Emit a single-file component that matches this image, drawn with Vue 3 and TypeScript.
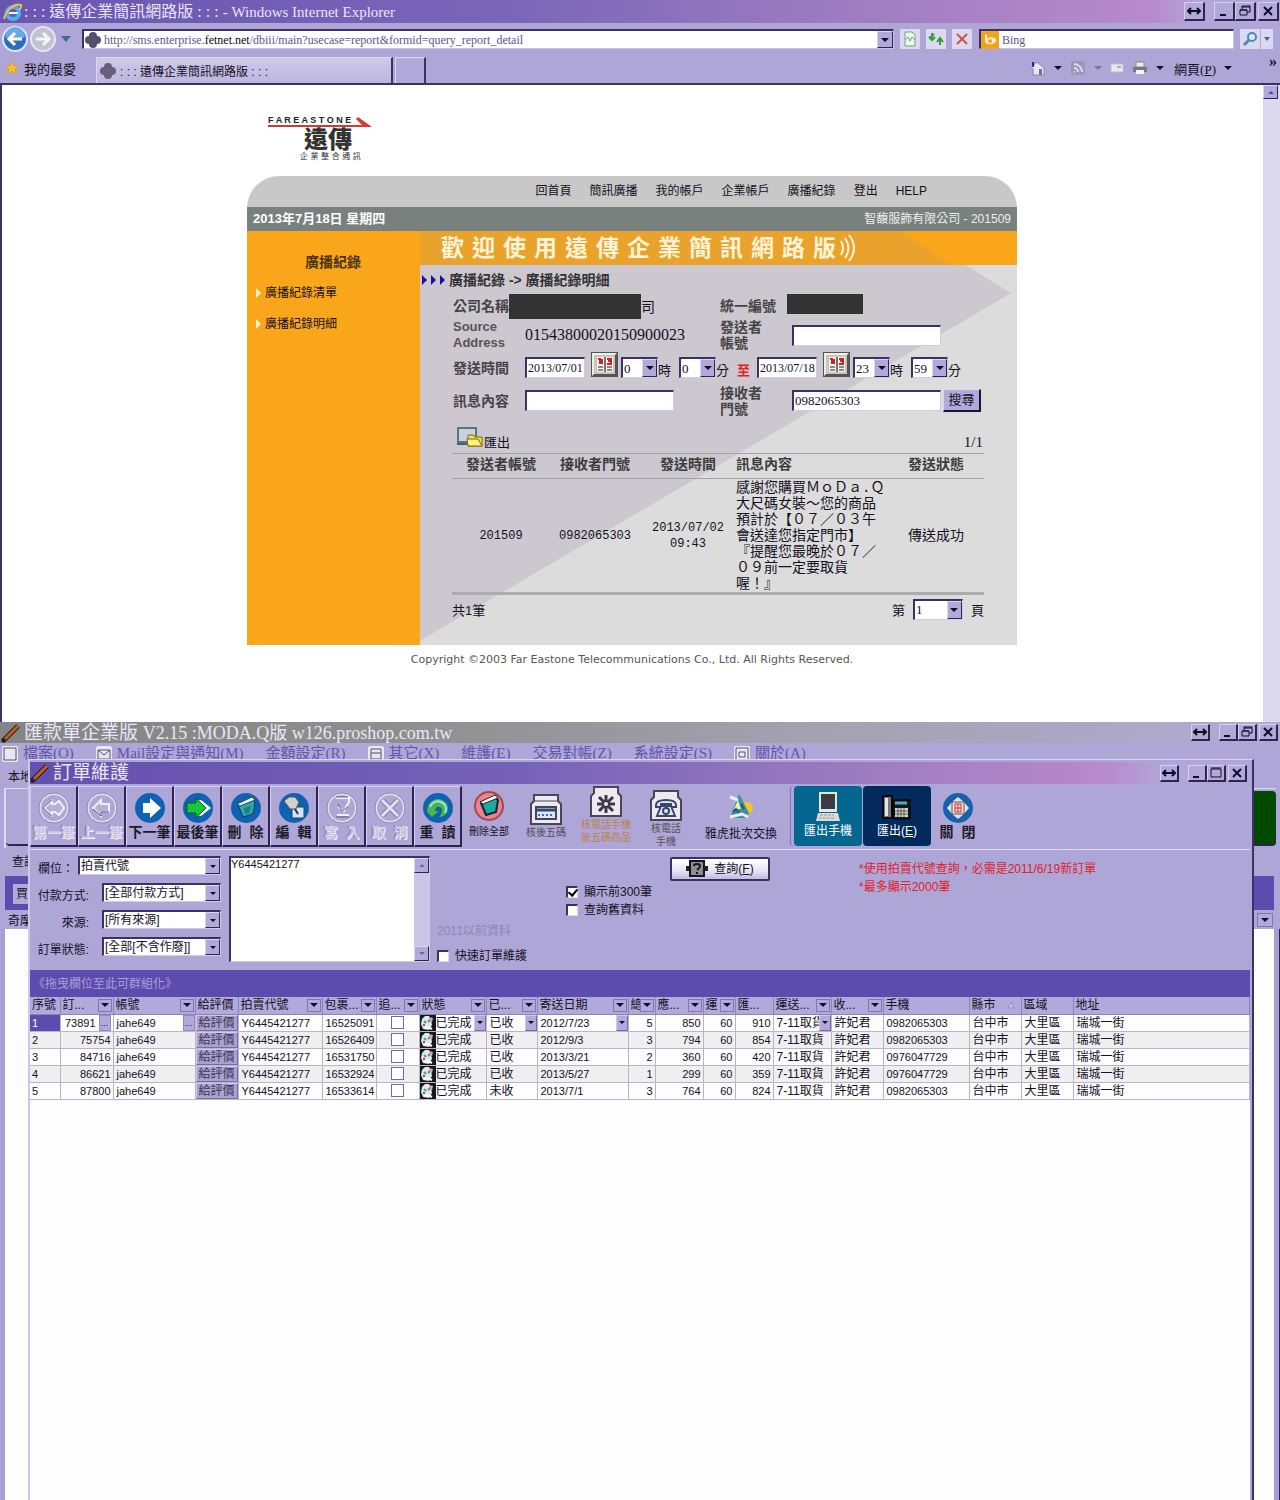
<script setup lang="ts">
import { ref } from 'vue'

const glyphs: Record<string, string> = {
  span: 'M1 7h12M4 4L1 7l3 3M10 4l3 3-3 3',
  min: 'M3 11h6',
  restore: 'M4 5V2h8v6h-3M2 6h7v5H2zM2 6h7M4 3h8',
  max: 'M2 3h10v8H2zM2 2h10',
  close: 'M3 3l8 8M11 3l-8 8',
}
const topButtons = ['span', 'min', 'restore', 'close']
const childButtons = ['span', 'min', 'max', 'close']

const siteNav = ['回首頁', '簡訊廣播', '我的帳戶', '企業帳戶', '廣播紀錄', '登出', 'HELP']
const sideLinks = ['廣播紀錄清單', '廣播紀錄明細']
const message = `感謝您購買ＭｏＤａ.Ｑ
大尺碼女裝～您的商品
預計於【０７／０３午
會送達您指定門市】
『提醒您最晚於０７／
０９前一定要取貨
喔！』`

const menus = [
  { label: '檔案(O)', icon: 'M2 2h12v12H2z' },
  { label: 'Mail設定與通知(M)', icon: 'M2 4h12v9H2zM2 4l6 5 6-5' },
  { label: '金額設定(R)', icon: '' },
  { label: '其它(X)', icon: 'M3 3h10v10H3zM3 7h10' },
  { label: '維護(E)', icon: '' },
  { label: '交易對帳(Z)', icon: '' },
  { label: '系統設定(S)', icon: '' },
  { label: '關於(A)', icon: 'M2 2h12v12H2zM5 6h6v5H5z' },
]

const tools = [
  { id: 'first', label: '第一筆', off: true },
  { id: 'prev', label: '上一筆', off: true },
  { id: 'next', label: '下一筆', off: false },
  { id: 'last', label: '最後筆', off: false },
  { id: 'delete', label: '刪  除', off: false },
  { id: 'edit', label: '編  輯', off: false },
  { id: 'save', label: '寫  入', off: true },
  { id: 'cancel', label: '取  消', off: true },
  { id: 'reload', label: '重  讀', off: false },
]

const filters = [
  { id: 'field', label: '欄位：', value: '拍賣代號', wide: true },
  { id: 'pay', label: '付款方式:', value: '[全部付款方式]', wide: false },
  { id: 'source', label: '來源:', value: '[所有來源]', wide: false },
  { id: 'state', label: '訂單狀態:', value: '[全部[不含作廢]]', wide: false },
]
const keyword = ref('Y6445421277')
const limitRows = ref(true)
const oldRows = ref(false)
const quick = ref(false)

interface Column { key: string; title: string; width: number; drop?: boolean; sort?: boolean }
const columns: Column[] = [
  { key: 'no', title: '序號', width: 30 },
  { key: 'order', title: '訂...', width: 53, drop: true },
  { key: 'account', title: '帳號', width: 82, drop: true },
  { key: 'rate', title: '給評價', width: 43 },
  { key: 'auction', title: '拍賣代號', width: 84, drop: true },
  { key: 'parcel', title: '包裹...', width: 54, drop: true },
  { key: 'track', title: '追...', width: 43, drop: true },
  { key: 'status', title: '狀態', width: 67, drop: true },
  { key: 'paid', title: '已...', width: 51, drop: true },
  { key: 'date', title: '寄送日期', width: 91, drop: true },
  { key: 'qty', title: '總', width: 27, drop: true },
  { key: 'due', title: '應...', width: 48, drop: true },
  { key: 'fee', title: '運', width: 32, drop: true },
  { key: 'total', title: '匯...', width: 38 },
  { key: 'ship', title: '運送...', width: 58, drop: true },
  { key: 'name', title: '收...', width: 52, drop: true },
  { key: 'phone', title: '手機', width: 86 },
  { key: 'city', title: '縣市', width: 52, sort: true },
  { key: 'area', title: '區域', width: 52 },
  { key: 'address', title: '地址', width: 0 },
]
const orders = [
  { no: 1, order: '73891', parcel: '16525091', paid: '已收', date: '2012/7/23', qty: 5, due: 850, total: 910, phone: '0982065303' },
  { no: 2, order: '75754', parcel: '16526409', paid: '已收', date: '2012/9/3', qty: 3, due: 794, total: 854, phone: '0982065303' },
  { no: 3, order: '84716', parcel: '16531750', paid: '已收', date: '2013/3/21', qty: 2, due: 360, total: 420, phone: '0976047729' },
  { no: 4, order: '86621', parcel: '16532924', paid: '已收', date: '2013/5/27', qty: 1, due: 299, total: 359, phone: '0976047729' },
  { no: 5, order: '87800', parcel: '16533614', paid: '未收', date: '2013/7/1', qty: 3, due: 764, total: 824, phone: '0982065303' },
]
</script>

<template>
  <div class="desktop">
    <section class="browser">
      <header class="titlebar">
        <svg class="app-icon" viewBox="0 0 20 20" width="20" height="20">
          <circle cx="10" cy="11" r="6" fill="none" stroke="#4db0f0" stroke-width="4" />
          <path d="M6 11h9" stroke="#e8f6ff" stroke-width="2" />
          <path d="M1 17C3 8 11 1 18 3c1 2-1 4-2 5" fill="none" stroke="#e8c04a" stroke-width="2" />
        </svg>
        <h1>: : : 遠傳企業簡訊網路版 : : : <span>- Windows Internet Explorer</span></h1>
        <div class="controls">
          <button v-for="b in topButtons" :key="b" :class="b" :aria-label="b">
            <svg viewBox="0 0 14 14" width="14" height="14"><path :d="glyphs[b]" /></svg>
          </button>
        </div>
      </header>

      <nav class="addressbar">
        <button class="round back" aria-label="上一頁">
          <svg viewBox="0 0 26 26" width="26" height="26">
            <circle cx="13" cy="13" r="12" fill="#2c6fc0" stroke="#dfe6f6" stroke-width="2" />
            <path d="M3 11a10 10 0 0 1 20 0c-5 3-14 3-20 0z" fill="#6aa8e6" />
            <path d="M20 13H8M13 7l-6 6 6 6" fill="none" stroke="#fff" stroke-width="3" />
          </svg>
        </button>
        <button class="round" aria-label="下一頁">
          <svg viewBox="0 0 26 26" width="26" height="26">
            <circle cx="13" cy="13" r="12" fill="#c2c2d2" stroke="#e6e4f2" stroke-width="2" />
            <path d="M6 13h12M13 7l6 6-6 6" fill="none" stroke="#f4f4fa" stroke-width="3" />
          </svg>
        </button>
        <svg class="mini" viewBox="0 0 10 6" width="10" height="6"><path d="M0 0h10L5 6z" fill="#3a6a98" /></svg>
        <div class="url">
          <svg viewBox="0 0 18 18" width="18" height="18"><g fill="#55506a"><circle cx="9" cy="5" r="4" /><circle cx="9" cy="13" r="4" /><circle cx="5" cy="9" r="4" /><circle cx="13" cy="9" r="4" /></g></svg>
          <p>http://sms.enterprise.<b>fetnet.net</b>/dbiii/main?usecase=report&amp;formid=query_report_detail</p>
          <button class="drop" aria-label="網址清單"></button>
        </div>
        <button class="flat" aria-label="相容性">
          <svg viewBox="0 0 18 18" width="18" height="18"><path d="M4 2h7l3 3v11H4zM4 10l3-3 2 4 2-4 3 3" fill="#eef6ee" stroke="#6aa878" /></svg>
        </button>
        <button class="flat" aria-label="重新整理">
          <svg viewBox="0 0 18 18" width="18" height="18"><path d="M7 4L4 7l-2 0M5 3v7M2 7l3 3 3-3M13 15V9M10 12l3-4 3 4" fill="none" stroke="#3a9a3c" stroke-width="2" /></svg>
        </button>
        <button class="flat" aria-label="停止">
          <svg viewBox="0 0 18 18" width="18" height="18"><path d="M4 4l10 10M14 4L4 14" fill="none" stroke="#d0504c" stroke-width="2" /></svg>
        </button>
        <div class="search">
          <svg viewBox="0 0 18 18" width="18" height="18"><rect width="18" height="18" fill="#f0a220" /><path d="M4 3l2 1v4c2-3 9-2 9 1 0 5-11 6-11 1z" fill="#fff2d0" /><circle cx="9" cy="10" r="2" fill="#f0a220" /></svg>
          <input type="text" aria-label="搜尋" value="Bing" />
        </div>
        <button class="flat find" aria-label="開始搜尋">
          <svg viewBox="0 0 18 18" width="18" height="18"><circle cx="11" cy="7" r="4" fill="#dcecfc" stroke="#4a86c8" stroke-width="2" /><path d="M8 10l-5 5" stroke="#4a86c8" stroke-width="3" /></svg>
        </button>
        <button class="flat slim" aria-label="搜尋選項"><svg viewBox="0 0 6 4" width="6" height="4"><path d="M0 0h6L3 4z" fill="#3a6a98" /></svg></button>
      </nav>

      <div class="tabs">
        <a class="fav" href="#">
          <svg viewBox="0 0 14 14" width="14" height="14"><path d="M7 0l2 5 5 0-4 3 2 6-5-4-5 4 2-6-4-3h5z" fill="#f8c030" stroke="#d89020" stroke-width=".6" /></svg>
          我的最愛
        </a>
        <button class="tab">
          <svg viewBox="0 0 18 18" width="18" height="18"><g fill="#66607c"><circle cx="9" cy="5" r="4" /><circle cx="9" cy="13" r="4" /><circle cx="5" cy="9" r="4" /><circle cx="13" cy="9" r="4" /></g></svg>
          : : : 遠傳企業簡訊網路版 : : :
        </button>
        <button class="tab blank" aria-label="新索引標籤"></button>
        <div class="commands">
          <svg viewBox="0 0 16 16" width="16" height="16"><path d="M1 8l6-6 7 6v7H3V8" fill="#e8e6f4" stroke="#8a86a8" /><path d="M3 2v5" stroke="#2c2c9c" stroke-width="2" /><path d="M9 9h3v6H9z" fill="#5a7a9a" /></svg>
          <i class="tri"></i>
          <svg viewBox="0 0 16 16" width="16" height="16"><rect x="1" y="1" width="14" height="14" rx="2" fill="#9c98b8" /><path d="M4 12h1M4 8a4 4 0 0 1 4 4M4 4a8 8 0 0 1 8 8" fill="none" stroke="#dedcec" stroke-width="2" /></svg>
          <i class="tri dim"></i>
          <svg viewBox="0 0 14 16" width="14" height="16"><path d="M1 4h12v8H1z" fill="#e8e8ee" stroke="#c0bcd8" /><path d="M7 6h4v2H7z" fill="#aab" /></svg>
          <svg viewBox="0 0 16 16" width="16" height="16"><path d="M4 2h8v5H4z" fill="#eee" stroke="#888" /><path d="M1 7h14v5H1z" fill="#77758a" /><path d="M4 10h8v4H4z" fill="#f4f4f4" /></svg>
          <i class="tri"></i>
          <a href="#">網頁(<u>P</u>)</a>
          <i class="tri"></i>
          <b>»</b>
        </div>
      </div>

      <div class="viewport">
        <div class="page">
          <div class="logo">
            <div class="brand"><b>F A R E A S T O N E</b>
              <svg viewBox="0 0 104 12" width="104" height="12"><path d="M0 9h90" stroke="#c83c3c" stroke-width="2" /><path d="M90 0l14 10H84V8h10L88 2z" fill="#d83a30" /></svg>
            </div>
            <strong>遠傳</strong>
            <small>企 業 整 合 通 訊</small>
          </div>

          <div class="panel">
            <nav class="sitenav"><a v-for="n in siteNav" :key="n" href="#">{{ n }}</a></nav>
            <div class="datebar"><b>2013年7月18日 星期四</b><span>智馥服飾有限公司 - 201509</span></div>
            <div class="split">
              <aside>
                <h2>廣播紀錄</h2>
                <a v-for="l in sideLinks" :key="l" href="#">{{ l }}</a>
              </aside>
              <main>
                <div class="welcome">歡 迎 使 用 遠 傳 企 業 簡 訊 網 路 版
                  <svg viewBox="0 0 16 28" width="16" height="28"><path d="M1 7q4 7 0 14M5 4q7 10 0 20M9 1q10 13 0 26" fill="none" stroke="#fff3d8" stroke-width="2" /></svg>
                </div>
                <div class="crumb"><i></i><i></i><i></i><h3>廣播紀錄 -&gt; 廣播紀錄明細</h3></div>

                <form class="query" @submit.prevent>
                  <span class="lab">公司名稱</span>
                  <div class="company"><span class="redact"></span>司</div>
                  <span class="lab">統一編號</span>
                  <div class="company"><span class="redact short"></span></div>

                  <span class="lab latin">Source Address</span>
                  <div class="source">01543800020150900023</div>
                  <label class="lab" for="sender">發送者<br />帳號</label>
                  <div class="field"><input id="sender" type="text" class="long" /></div>

                  <label class="lab" for="from">發送時間</label>
                  <div class="times">
                    <input id="from" type="text" class="date" value="2013/07/01" />
                    <button type="button" class="cal" aria-label="選擇開始日期"><svg viewBox="0 0 18 18" width="18" height="18"><path d="M1 1h7v15H1zM10 1h7v15h-7z" fill="#f8f4f0" /><path d="M2 3h2v5M6 8V3M11 3h4v2h-3M15 5v3h-4" fill="none" stroke="#c8242c" stroke-width="2" /><path d="M2 11h5M11 11h5M2 14h5M11 14h5M9 1v15" stroke="#222" /></svg></button>
                    <span class="combo small"><select aria-label="開始時"><option>0</option></select><i></i></span><span class="unit">時</span>
                    <span class="combo small"><select aria-label="開始分"><option>0</option></select><i></i></span><span class="unit">分</span>
                    <em>至</em>
                    <input type="text" class="date" aria-label="結束日期" value="2013/07/18" />
                    <button type="button" class="cal" aria-label="選擇結束日期"><svg viewBox="0 0 18 18" width="18" height="18"><path d="M1 1h7v15H1zM10 1h7v15h-7z" fill="#f8f4f0" /><path d="M2 3h2v5M6 8V3M11 3h4v2h-3M15 5v3h-4" fill="none" stroke="#c8242c" stroke-width="2" /><path d="M2 11h5M11 11h5M2 14h5M11 14h5M9 1v15" stroke="#222" /></svg></button>
                    <span class="combo small"><select aria-label="結束時"><option>23</option></select><i></i></span><span class="unit">時</span>
                    <span class="combo small"><select aria-label="結束分"><option>59</option></select><i></i></span><span class="unit">分</span>
                  </div>

                  <label class="lab" for="content">訊息內容</label>
                  <div class="field"><input id="content" type="text" class="long" /></div>
                  <label class="lab" for="receiver">接收者<br />門號</label>
                  <div class="field"><input id="receiver" type="text" class="long" value="0982065303" /><button type="submit" class="go">搜尋</button></div>
                </form>

                <div class="results">
                  <div class="export">
                    <a href="#">
                      <svg viewBox="0 0 26 22" width="26" height="22"><path d="M1 2h18v14H1z" fill="#c6d2dc" stroke="#5a7284" stroke-width="2" /><path d="M0 18h12" stroke="#466" stroke-width="2" /><path d="M11 9h5l2 2h7v9H11z" fill="#f2e04a" stroke="#7a6c10" /><path d="M11 20l-1-7h11l4 7z" fill="#fff27a" stroke="#7a6c10" /></svg>
                      匯出
                    </a>
                    <span>1/1</span>
                  </div>
                  <table class="log">
                    <colgroup><col class="c1" /><col class="c2" /><col class="c3" /><col class="c4" /><col class="c5" /></colgroup>
                    <thead><tr><th>發送者帳號</th><th>接收者門號</th><th>發送時間</th><th class="left">訊息內容</th><th>發送狀態</th></tr></thead>
                    <tbody><tr><td>201509</td><td>0982065303</td><td>2013/07/02<br />09:43</td><td class="left msg">{{ message }}</td><td>傳送成功</td></tr></tbody>
                  </table>
                  <div class="pager">
                    <span>共1筆</span>
                    <label>第 <span class="combo page-no"><select aria-label="頁次"><option>1</option></select><i></i></span> 頁</label>
                  </div>
                </div>
              </main>
            </div>
          </div>
          <footer>Copyright ©2003 Far Eastone Telecommunications Co., Ltd. All Rights Reserved.</footer>
        </div>
        <div class="vscroll"><button aria-label="向上捲動"></button></div>
      </div>
    </section>

    <section class="shop">
      <header class="titlebar gray">
        <svg class="app-icon" viewBox="0 0 20 20" width="20" height="20"><path d="M2 18L17 3" stroke="#2a1a14" stroke-width="5" /><path d="M3 17L17 3" stroke="#b8632c" stroke-width="3" /><path d="M1 19l3-3" stroke="#222" stroke-width="3" /></svg>
        <h1>匯款單企業版 <span>V2.15 :MODA.Q版 w126.proshop.com.tw</span></h1>
        <div class="controls">
          <button v-for="b in topButtons" :key="b" :class="b" :aria-label="b">
            <svg viewBox="0 0 14 14" width="14" height="14"><path :d="glyphs[b]" /></svg>
          </button>
        </div>
      </header>
      <nav class="menus">
        <a v-for="m in menus" :key="m.label" href="#">
          <svg v-if="m.icon" viewBox="0 0 16 16" width="16" height="16"><rect width="16" height="16" rx="2" fill="#e8e6f2" /><path :d="m.icon" fill="none" stroke="#55506a" /></svg>
          {{ m.label }}
        </a>
      </nav>

      <div class="behind">
        <div class="b-tab">本地</div>
        <div class="b-tools"><span></span></div>
        <div class="b-label">查詢</div>
        <div class="b-group"><span>買</span></div>
        <div class="b-head"><span>奇摩</span><button class="filter" aria-label="篩選"></button></div>
        <div class="b-body"></div>
      </div>

      <section class="child">
        <header class="titlebar inner">
          <svg class="app-icon" viewBox="0 0 20 20" width="20" height="20"><path d="M2 18L17 3" stroke="#2a1a14" stroke-width="5" /><path d="M3 17L17 3" stroke="#b8632c" stroke-width="3" /><path d="M1 19l3-3" stroke="#222" stroke-width="3" /></svg>
          <h1>訂單維護</h1>
          <div class="controls">
            <button v-for="b in childButtons" :key="b" :class="b" :aria-label="b">
              <svg viewBox="0 0 14 14" width="14" height="14"><path :d="glyphs[b]" /></svg>
            </button>
          </div>
        </header>

        <div class="toolbar">
          <button v-for="t in tools" :key="t.id" class="tool" :class="{ off: t.off }">
            <svg viewBox="0 0 32 32" width="32" height="32">
              <circle v-if="t.off" cx="16" cy="16" r="14" fill="none" stroke="#e9e7f4" stroke-width="2" />
              <circle v-if="t.off" cx="16" cy="16" r="15" fill="none" stroke="#8e88b0" stroke-width="1" />
              <circle v-if="!t.off" cx="16" cy="16" r="15" fill="#0f62b2" />
              <g v-if="t.id === 'first'"><path d="M14 9l-8 7 8 7v-3h3l4 3 5-7-5-7-4 3h-3z" fill="#b6b0d6" stroke="#efeefa" stroke-width="2" /><path d="M14 8l-9 8 9 8" fill="none" stroke="#6c6890" /></g>
              <g v-else-if="t.id === 'prev'"><path d="M15 8l-8 8 8 8v-4h8v-8h-8z" fill="#b6b0d6" stroke="#efeefa" stroke-width="2" /><path d="M7 17l8 7v-4h8" fill="none" stroke="#403c5c" /></g>
              <path v-else-if="t.id === 'next'" d="M16 6l11 10-11 10v-5H9V11h7z" fill="#fff" />
              <g v-else-if="t.id === 'last'"><path d="M19 8l10 8-10 8h-4V8z" fill="#fff" /><path d="M14 6l10 10-10 10v-5H5V11h9z" fill="#18c838" stroke="#0a5a20" /></g>
              <g v-else-if="t.id === 'delete'"><path d="M8 13l14-6 3 3-2 12-10 3z" fill="#2ea6a8" stroke="#073a5c" /><path d="M7 12l15-7 3 3-15 6z" fill="#e6f4f4" stroke="#345" /><path d="M14 16l7-2-2 7-4 1z" fill="#1c7c98" /></g>
              <g v-else-if="t.id === 'edit'"><path d="M14 15h12v11H14z" fill="#cfe4fa" stroke="#245" /><path d="M6 9l5-4h6l4 5-3 7h-6z" fill="#d2d2cc" stroke="#555" /><path d="M17 17l3 5" stroke="#333" stroke-width="2" /></g>
              <g v-else-if="t.id === 'save'" fill="none" stroke="#f0effa" stroke-width="2"><path d="M10 6h13v4l-5 9-6-4M11 23h12" /><path d="M10 5h12M12 12l4 7 6-4M10 25h13" stroke="#625e80" stroke-width="1" /></g>
              <g v-else-if="t.id === 'cancel'" fill="none"><path d="M8 8l16 16M24 8L8 24" stroke="#85809f" stroke-width="5" /><path d="M8 8l16 16M24 8L8 24" stroke="#e4e2f2" stroke-width="3" /></g>
              <g v-else fill="none"><path d="M5 20c0-8 5-13 11-13 5 0 10 4 10 9 0 6-5 9-9 9 3-3 4-7 2-9-3-3-6 0-6 3h4l-7 6-6-6z" fill="#45b848" /><path d="M8 15c2-5 7-7 11-5 5 2 6 7 4 11" stroke="#9fe0ee" stroke-width="2" /></g>
            </svg>
            <span>{{ t.label }}</span>
          </button>
          <button class="plain w1">
            <svg viewBox="0 0 32 32" width="32" height="32"><circle cx="16" cy="16" r="14" fill="#e8848c" stroke="#a84450" stroke-width="2" /><path d="M8 13l14-6 3 3-2 12-10 3z" fill="#1fa8a0" stroke="#123" stroke-width="2" /><path d="M7 12l15-7 3 3-15 6z" fill="#f4fbfb" stroke="#223" /></svg>
            <span>刪除全部</span>
          </button>
          <button class="plain dim w2 low">
            <svg viewBox="0 0 34 32" width="34" height="32"><path d="M5 1h24v6l3 3v20H2V10l3-3z" fill="#eceaf0" stroke="#4a4656" stroke-width="2" /><path d="M5 7h24" stroke="#4a4656" /><path d="M7 13h20v12H7z" fill="#dce8fa" stroke="#3c4668" stroke-width="2" /><path d="M7 16h20" stroke="#3c4668" stroke-width="3" /><path d="M9 21h16" stroke="#4468b8" stroke-width="2" stroke-dasharray="2 2" /></svg>
            <span>核後五碼</span>
          </button>
          <button class="plain warn w2">
            <svg viewBox="0 0 34 32" width="34" height="32"><path d="M5 1h24v6l3 3v20H2V10l3-3z" fill="#eceaf0" stroke="#4a4656" stroke-width="2" /><path d="M17 9v18M8 18h18M10 11l14 14M24 11L10 25" stroke="#3a3848" stroke-width="3" /><circle cx="17" cy="18" r="2" fill="#eceaf0" /></svg>
            <span>核電話手機<br />後五碼商品</span>
          </button>
          <button class="plain dim w2">
            <svg viewBox="0 0 34 32" width="34" height="32"><path d="M5 1h24v6l3 3v20H2V10l3-3z" fill="#eceaf0" stroke="#4a4656" stroke-width="2" /><path d="M7 15q0-5 10-5t10 5v2h-5v-3H12v3H7z" fill="#dce8fa" stroke="#3c4668" stroke-width="2" /><path d="M12 16h10l4 10H8z" fill="#dce8fa" stroke="#3c4668" stroke-width="2" /><circle cx="17" cy="21" r="3" fill="none" stroke="#3c4668" stroke-width="2" /></svg>
            <span>核電話<br />手機</span>
          </button>
          <button class="plain w3">
            <svg viewBox="0 0 32 30" width="32" height="30"><circle cx="22" cy="16" r="6" fill="#f2c62c" /><path d="M14 2l10 19-3 5H5z" fill="#3f8f9c" /><path d="M13 8l-4 9h7z" fill="#e8f2a0" /><path d="M5 5l8 3M5 25l12-3 6 3" stroke="#e8f0f8" stroke-width="3" fill="none" /><path d="M8 20l3-3 3 4M16 12l3 5" stroke="#1f5a78" stroke-width="2" fill="none" /></svg>
            <span>雅虎批次交換</span>
          </button>
          <button class="tile teal">
            <svg viewBox="0 0 32 32" width="32" height="32"><path d="M7 1h18v20H7z" fill="#e6e6e0" /><path d="M9 3h14v15H9z" fill="#3a3e42" /><path d="M6 22h20l2 8H4z" fill="#dcdcd6" /><path d="M8 24h14M7 27h16" stroke="#9a9a94" stroke-dasharray="3 1" /></svg>
            <span>匯出手機</span>
          </button>
          <button class="tile navy">
            <svg viewBox="0 0 32 32" width="32" height="32"><path d="M2 5h9v22H2z" fill="#777" stroke="#050a14" stroke-width="2" /><path d="M4 7h3v18H4z" fill="#e6e6e6" /><path d="M12 9h17v19H12z" fill="#15181c" stroke="#000" /><path d="M14 12h12" stroke="#4ab0c0" stroke-width="3" /><path d="M14 17h13v9H14z" fill="#d8d8c8" /><path d="M14 20h13M14 23h13M17 17v9M20 17v9M23 17v9" stroke="#555" /></svg>
            <span>匯出(<u>E</u>)</span>
          </button>
          <button class="tool bare">
            <svg viewBox="0 0 32 32" width="32" height="32"><circle cx="16" cy="16" r="15" fill="#1660b0" /><path d="M16 5l6 5H10zM16 27l6-5H10zM5 16l5-6v12zM27 16l-5-6v12z" fill="#e2e2e6" /><path d="M10 10h12v12H10z" fill="#f6e0dc" stroke="#555" /><path d="M13 12h6v8h-6zM13 16h6M16 12v8" fill="none" stroke="#c83038" /></svg>
            <span>{{ '關  閉' }}</span>
          </button>
        </div>

        <div class="criteria">
          <div class="selects">
            <div v-for="f in filters" :key="f.id" class="row" :class="{ wide: f.wide }">
              <label :for="f.id">{{ f.label }}</label>
              <span class="combo lilac"><select :id="f.id"><option>{{ f.value }}</option></select><i></i></span>
            </div>
          </div>
          <div class="memo">
            <textarea v-model="keyword" aria-label="查詢內容"></textarea>
            <div class="bar"><i class="up"></i><i></i></div>
          </div>
          <div class="quick">
            <span>2011以前資料</span>
            <label><input v-model="quick" type="checkbox" />快速訂單維護</label>
          </div>
          <div class="range">
            <label><input v-model="limitRows" type="checkbox" />顯示前300筆</label>
            <label><input v-model="oldRows" type="checkbox" />查詢舊資料</label>
          </div>
          <button class="ask">
            <svg viewBox="0 0 22 18" width="22" height="18"><path d="M0 6h22v5H0z" fill="#222" /><path d="M4 1h14v15H4z" fill="#8e8c96" stroke="#16161c" stroke-width="2" /><path d="M8 6q0-2 3-2t3 2-3 4M11 12v2" fill="none" stroke="#16161c" stroke-width="2" /></svg>
            <span>查詢(<u>F</u>)</span>
          </button>
          <div class="notes"><p>*使用拍賣代號查詢，必需是2011/6/19新訂單</p><p>*最多顯示2000筆</p></div>
        </div>

        <div class="grouping">《拖曳欄位至此可群組化》</div>
        <div class="gridbox">
          <table class="grid">
            <colgroup><col v-for="c in columns" :key="c.key" :style="c.width ? { width: c.width + 'px' } : {}" /></colgroup>
            <thead>
              <tr>
                <th v-for="c in columns" :key="c.key" :class="c.key">
                  <div><span>{{ c.title }}</span><button v-if="c.drop" class="filter" aria-label="篩選"></button><svg v-if="c.sort" viewBox="0 0 8 8" width="8" height="8"><path d="M1 7h6L4 1z" fill="#c6c0e6" stroke="#948cc0" /></svg></div>
                </th>
              </tr>
            </thead>
            <tbody>
              <tr v-for="(o, i) in orders" :key="o.no" :class="{ current: i === 0 }">
                <td class="no">{{ o.no }}</td>
                <td class="order num"><div>{{ o.order }}<button v-if="i === 0" class="cellbtn" aria-label="更多">...</button></div></td>
                <td class="account"><div>jahe649<button v-if="i === 0" class="cellbtn" aria-label="更多">...</button></div></td>
                <td class="rate"><button>給評價</button></td>
                <td>Y6445421277</td>
                <td>{{ o.parcel }}</td>
                <td class="track"><input type="checkbox" :aria-label="'追蹤 ' + o.order" /></td>
                <td class="status"><div>
                  <svg viewBox="0 0 16 16" width="16" height="16"><path d="M0 0h16v16H0z" fill="#17181f" /><path d="M2 4l3-3h4l2 4 1 5-3 5-6-1-2-5z" fill="#dcebe4" /><path d="M9 2l4 1-1 4-3-1z" fill="#e9a0b4" /><path d="M4 6l2 2M8 7l2-2" stroke="#4f9a92" stroke-width="2" fill="none" /><path d="M4 13l4-1 4 2" stroke="#fff" stroke-width="2" fill="none" /><path d="M3 10h2" stroke="#b04858" stroke-width="2" /></svg>
                  <span>已完成</span><button v-if="i === 0" class="cellbtn arrow" aria-label="選擇狀態"></button></div></td>
                <td class="cjk"><div>{{ o.paid }}<button v-if="i === 0" class="cellbtn arrow" aria-label="選擇付款"></button></div></td>
                <td><div>{{ o.date }}<button v-if="i === 0" class="cellbtn arrow" aria-label="選擇日期"></button></div></td>
                <td class="num">{{ o.qty }}</td>
                <td class="num">{{ o.due }}</td>
                <td class="num">60</td>
                <td class="num">{{ o.total }}</td>
                <td class="ship"><div><span>7-11取貨</span><button v-if="i === 0" class="cellbtn arrow" aria-label="選擇運送"></button></div></td>
                <td class="cjk">許妃君</td>
                <td>{{ o.phone }}</td>
                <td class="cjk">台中市</td>
                <td class="cjk">大里區</td>
                <td class="cjk">瑞城一街</td>
              </tr>
            </tbody>
          </table>
        </div>
      </section>
    </section>
  </div>
</template>

<style>
body { margin: 0; background: #aea6d6; }
</style>

<style scoped>
* { box-sizing: border-box; }
.desktop { display: flex; flex-direction: column; min-height: 100vh; font-family: "Liberation Sans", "Noto Sans CJK TC", sans-serif; font-size: 12px; color: #14101f; overflow: hidden; }
button { padding: 0; border: 0; background: none; font: inherit; color: inherit; }
a { color: inherit; text-decoration: none; }
h1, h2, h3, p { margin: 0; font-weight: normal; }
svg { display: block; flex: none; }
input, select, textarea { font: inherit; color: inherit; border-radius: 0; margin: 0; }

.titlebar { display: flex; align-items: center; height: 23px; padding: 0 1px 0 3px; background: linear-gradient(90deg, #6a55b2 0, #7a66b8 40%, #9c7cc0 65%, #b78acb 90%, #b3a6d8 94%, #b3a6d8 100%); }
.titlebar h1 { flex: 1; font: 16px/20px "Liberation Serif", "Noto Sans CJK TC", serif; color: #eae6fa; white-space: nowrap; }
.titlebar h1 span { font-size: 15px; }
.titlebar .app-icon { margin-right: 1px; }
.controls { display: flex; align-items: center; }
.controls button { display: flex; align-items: center; justify-content: center; width: 21px; height: 19px; background: #b1a9da; border: solid; border-width: 1px 2px 2px 1px; border-color: #d6d0f0 #2d2452 #2d2452 #d6d0f0; }
.controls .span { margin-right: 9px; }
.controls .close { margin-left: 2px; }
.controls path { fill: none; stroke: #120c26; stroke-width: 2; }
.controls .restore path, .controls .max path { stroke-width: 1; }
.titlebar.gray { height: 21px; padding: 0 2px 0 1px; background: linear-gradient(90deg, #858585 0, #8e8e8e 30%, #a3a1ae 62%, #b2abd2 100%); }
.titlebar.gray h1, .titlebar.inner h1 { margin-left: 2px; font-size: 19px; }
.titlebar.gray h1 span { font-size: 18px; }
.titlebar.inner { height: 22px; padding: 0 3px 0 0; background: linear-gradient(90deg, #6450ae 0, #7562b8 40%, #9c7cc0 68%, #b78acb 88%, #b3a6d8 93%, #b3a6d8 100%); }
.gray .controls button, .inner .controls button { width: 19px; height: 17px; }

.browser { background: #aea6d6; }
.addressbar { display: flex; align-items: center; height: 32px; padding: 0 7px 0 2px; }
.round { border-radius: 50%; width: 26px; height: 26px; margin-right: 2px; }
.mini { margin: 0 11px 0 3px; }
.url, .search { display: flex; align-items: center; height: 20px; background: #fff; border: solid; border-width: 2px 1px 1px 2px; border-color: #3c3164 #c9c3e8 #c9c3e8 #3c3164; }
.url { flex: 1; margin-right: 6px; }
.url p { flex: 1; margin-left: 2px; font: 12px/16px "Liberation Serif", serif; color: #5c5490; white-space: nowrap; }
.url b { font-weight: normal; color: #0c0818; }
.drop { width: 16px; height: 17px; }
.drop, .combo i, .filter, .cellbtn.arrow, .vscroll button { display: flex; align-items: center; justify-content: center; background: #b1a9da; border: 1px solid; border-color: #dad5f2 #2d2452 #2d2452 #dad5f2; }
.drop::before, .combo i::before, .filter::before, .cellbtn.arrow::before { content: ""; border: solid transparent; border-width: 4px 4px 0; border-top-color: #120c26; }
.flat { display: flex; align-items: center; justify-content: center; width: 20px; height: 20px; margin-right: 6px; background: #dcd8f0; }
.search { width: 255px; margin: 0 6px 0 1px; }
.search input { flex: 1; min-width: 0; border: 0; background: none; padding: 0 3px; font: 12px/16px "Liberation Serif", serif; color: #5c5490; }
.flat.find { margin-right: 1px; }
.flat.slim { width: 12px; margin: 0; }
.tabs { display: flex; align-items: flex-end; height: 28px; padding: 0 3px 0 5px; font-size: 13px; }
.fav { display: flex; align-items: center; gap: 5px; width: 91px; height: 28px; padding-bottom: 2px; }
.tab { display: flex; align-items: center; gap: 3px; width: 297px; height: 26px; padding: 0 2px; background: linear-gradient(#cfc9ea, #bcb5df); border: solid; border-width: 1px 2px 0 1px; border-color: #dcd8f2 #3c3164 #3c3164 #dcd8f2; font-size: 12px; }
.tab.blank { width: 31px; margin-left: 2px; background: #b1a9da; }
.commands { display: flex; align-items: center; gap: 8px; height: 28px; padding-bottom: 2px; margin-left: auto; font-family: "Liberation Serif", "Noto Sans CJK TC", serif; }
.commands a { margin-left: 2px; }
.commands b { font-size: 16px; margin: -12px 0 0 29px; }
.tri { border: solid transparent; border-width: 4px 4px 0; border-top-color: #120c26; }
.tri.dim { border-top-color: #7a72a4; }

.viewport { display: flex; border: solid #3c3164; border-width: 2px 0 0 2px; background: #fff; }
.vscroll { width: 17px; background: #dcd8ee; }
.vscroll button { width: 15px; height: 14px; }
.vscroll button::before { content: ""; border: solid transparent; border-width: 0 3px 3px; border-bottom-color: #564c86; }
.page { flex: 1; display: flex; flex-direction: column; align-items: center; padding: 29px 1px 54px 0; }
.logo { width: 770px; max-width: 100%; height: 62px; padding-left: 21px; display: flex; flex-direction: column; }
.brand b { display: block; height: 3px; font-size: 9px; line-height: 12px; color: #222; }
.logo strong { margin-left: 36px; font-size: 24px; line-height: 22px; font-weight: 900; color: #333; }
.logo small { margin: 0 0 0 32px; font: 8px/12px "DejaVu Sans", "Noto Sans CJK TC", sans-serif; color: #333; }
.panel { width: 770px; max-width: 100%; border-radius: 32px 32px 0 0; overflow: hidden; }
.sitenav { display: flex; justify-content: flex-end; align-items: center; gap: 18px; height: 31px; padding: 0 90px 2px 0; background: #c8c8c8; line-height: 16px; }
.datebar { display: flex; justify-content: space-between; align-items: center; height: 24px; padding: 0 6px 3px; background: #78817e; color: #fff; }
.datebar b { font-size: 13px; }
.datebar span { color: #eceeed; }
.split { display: flex; }
aside { width: 173px; padding: 22px 0 0 9px; background: #faa61a; }
aside h2 { margin-bottom: 13px; padding-right: 10px; text-align: center; font-size: 14px; line-height: 18px; font-weight: bold; color: #4a3510; }
aside a { display: flex; align-items: center; gap: 4px; margin-bottom: 13px; line-height: 18px; }
aside a::before { content: ""; border: solid transparent; border-width: 5px 0 5px 5px; border-left-color: #fff0d0; }
main { position: relative; flex: 1; height: 414px; background: #dcdcdc; }
main::before { content: ""; position: absolute; inset: 0; background: #cdc8cf; clip-path: polygon(0 0, 82% 0, 99% 15%, 0 99%); }
main > * { position: relative; }
.welcome { display: flex; align-items: center; gap: 4px; height: 34px; padding-left: 21px; background: linear-gradient(34deg, #e9a32c 0, #e9a32c 82%, #faa61a 82%); font: bold 23px/34px "DejaVu Sans", "Noto Sans CJK TC", sans-serif; color: #fff3d8; white-space: nowrap; }
.crumb { display: flex; align-items: center; height: 28px; padding: 2px 0 0 2px; }
.crumb i { width: 5px; margin-right: 4px; border: solid transparent; border-width: 5px 0 5px 5px; border-left-color: #1a10a0; }
.crumb h3 { font-size: 14px; line-height: 18px; font-weight: bold; color: #333; }
.query { display: grid; grid-template-columns: 72px 195px 72px 1fr; grid-template-rows: 26px 32px 33px 33px; align-items: center; padding-left: 33px; }
.lab { font-size: 14px; line-height: 16px; font-weight: bold; color: #444; }
.lab.latin { width: 60px; font-size: 13px; color: #555; }
.company { display: flex; align-items: center; margin-left: -16px; height: 25px; font-size: 14px; }
.redact { width: 132px; height: 25px; background: #333; }
.redact.short { width: 76px; height: 20px; margin: 0 0 4px 11px; }
.source { font: 16px/20px "Liberation Serif", serif; }
.query input, .combo select { height: 21px; padding: 0 1px; background: #fff; border: solid; border-width: 2px 1px 1px 2px; border-color: #3c3164 #cfcae6 #cfcae6 #3c3164; font: 13px/17px "Liberation Serif", "Noto Sans CJK TC", serif; }
.query .long { width: 149px; }
.query .date { width: 60px; font-size: 12px; }
.field { display: flex; align-items: center; gap: 2px; }
.go { width: 38px; height: 23px; background: #b1a9da; border: solid; border-width: 1px 2px 2px 1px; border-color: #dad5f2 #1c1438 #1c1438 #dad5f2; font-size: 13px; line-height: 18px; }
.times { grid-column: span 3; display: flex; align-items: center; }
.cal { display: flex; align-items: center; justify-content: center; width: 25px; height: 23px; margin: 0 4px 6px 7px; background: #c9c5bd; border: 2px solid; border-color: #f0eee8 #555 #555 #f0eee8; outline: 1px solid #555; }
.combo { position: relative; display: inline-flex; }
.combo select { appearance: none; width: 100%; }
.combo i { position: absolute; right: 1px; top: 2px; bottom: 1px; width: 15px; pointer-events: none; }
.combo.small { width: 37px; }
.unit { width: 21px; padding-top: 6px; font-size: 13px; line-height: 16px; }
.times em { width: 20px; padding-top: 6px; font-style: normal; font-weight: bold; font-size: 13px; line-height: 16px; color: #e02020; }
.results { width: 532px; margin-left: 32px; }
.export { display: flex; justify-content: space-between; align-items: flex-end; height: 36px; padding: 0 1px 1px 5px; font-size: 13px; line-height: 18px; }
.export a { display: flex; align-items: flex-end; gap: 1px; }
.export svg { margin-bottom: 4px; }
.export span { font: 15px/20px "Liberation Serif", serif; }
.log { width: 100%; table-layout: fixed; border-collapse: collapse; font: 12px/16px "Liberation Mono", "Noto Sans CJK TC", monospace; text-align: center; border-bottom: 3px solid #acacac; }
.log .c1 { width: 98px; } .log .c2 { width: 90px; } .log .c3 { width: 96px; } .log .c4 { width: 152px; }
.log th, .log td { padding: 0; }
.log th { height: 25px; padding-bottom: 4px; border: solid #a4a2a6; border-width: 1px 0; font: bold 14px/18px "Liberation Sans", "Noto Sans CJK TC", sans-serif; color: #3c3c3c; }
.log td { height: 115px; }
.log td:last-child { font-size: 14px; }
.log .left { text-align: left; }
.log .msg { font-size: 14px; white-space: pre; }
.pager { display: flex; justify-content: space-between; align-items: center; height: 28px; font-size: 13px; }
.pager label { display: flex; align-items: center; gap: 8px; }
.page-no { width: 50px; }
footer { margin-top: 7px; font: 11px/16px "DejaVu Sans", sans-serif; color: #555; }

.shop { position: relative; flex: 1; display: flex; flex-direction: column; background: #aea6d6; }
.menus { display: flex; gap: 22px; height: 21px; padding-left: 2px; overflow: hidden; font: 15px/21px "Liberation Serif", "Noto Sans CJK TC", serif; color: #6354ac; white-space: nowrap; }
.menus a { display: flex; align-items: center; gap: 5px; }
.behind { flex: 1; display: flex; flex-direction: column; font-size: 12px; }
.b-tab { height: 24px; padding: 4px 0 0 8px; line-height: 18px; }
.b-tools { display: flex; height: 60px; margin: 0 4px; border: solid #ddd8f4; border-width: 1px 0 0 2px; padding: 2px 0; }
.b-tools span { flex: 1; border-bottom: 2px solid #2d2452; background: linear-gradient(90deg, transparent 50%, #004a00 50%); border-radius: 4px; }
.b-label { height: 28px; padding-left: 12px; line-height: 28px; }
.b-group { height: 34px; margin: 0 6px 0 5px; padding: 8px 0 0 8px; background: #5c4cad; }
.b-group span { display: block; width: 40px; padding-left: 3px; background: #b1a9da; line-height: 20px; }
.b-head { display: flex; justify-content: space-between; align-items: center; height: 19px; margin: 0 6px 0 5px; padding: 0 1px 0 3px; }
.b-head .filter { width: 16px; height: 14px; }
.b-body { flex: 1; margin: 0 6px 0 5px; background: #fdfdfd; box-shadow: 5px 0 0 #a79dd2, 6px 0 0 #2d2452, -4px 0 0 #a79dd2; }

.child { position: absolute; inset: 37px 26px 0 28px; display: flex; flex-direction: column; padding: 2px 2px 0 0; background: #aea6d6; border: solid; border-width: 1px 2px 0 2px; border-color: #d9d4f2 #3c3164 #3c3164 #cdc7ec; }
.toolbar { display: flex; height: 66px; padding: 2px 0; border-bottom: 1px solid #ddd8f4; }
.tool { display: flex; flex-direction: column; align-items: center; width: 48px; height: 61px; padding-top: 5px; border: solid; border-width: 1px 2px 2px 1px; border-color: #d6d0f0 #2d2452 #2d2452 #d6d0f0; font-size: 14px; line-height: 17px; font-weight: bold; white-space: pre; color: #1c1a2a; }
.tool.off { color: #c9c5e0; text-shadow: 1px 1px 0 #f2f0fa, -1px 0 0 #757094; }
.tool.bare { width: 54px; border-color: transparent; }
.plain { display: flex; flex-direction: column; align-items: center; padding-top: 5px; font-size: 10px; line-height: 13px; white-space: nowrap; }
.plain.w1 { width: 54px; padding-top: 4px; }
.plain.w1 span { padding-top: 3px; }
.plain.w2 { width: 60px; }
.plain.dim { padding-top: 4px; color: #55505c; }
.plain.low { padding-top: 8px; }
.plain.warn { color: #bd8052; padding-top: 0; }
.plain.w3 { width: 90px; margin-right: 3px; padding-top: 6px; font-size: 12px; }
.plain.w3 span { padding-top: 6px; }
.plain.w3 + .tile { box-shadow: -3px 0 0 #aea6d6, -4px 0 0 #7f76b4; }
.tile { display: flex; flex-direction: column; align-items: center; width: 68px; height: 60px; margin-left: 1px; padding-top: 5px; border-radius: 4px; color: #fff; line-height: 16px; }
.teal { background: #05678f; margin-left: 5px; }
.navy { background: #022a5c; }

.criteria { display: grid; grid-template-columns: 199px 201px 136px 104px 170px 1fr; height: 120px; padding-top: 6px; line-height: 16px; }
.selects { display: flex; flex-direction: column; gap: 5px; padding-right: 8px; }
.row { display: flex; justify-content: flex-end; align-items: flex-start; gap: 13px; height: 22px; }
.row.wide { gap: 4px; }
.row label { padding-top: 5px; line-height: 16px; }
.lilac { width: 119px; }
.wide .lilac { width: 143px; }
.lilac select { height: 19px; font: 12px/16px "Liberation Sans", "Noto Sans CJK TC", sans-serif; }
.lilac i::before { border-width: 3px 3px 0; }
.memo { display: flex; height: 106px; background: #fff; border: solid; border-width: 2px 1px 1px 2px; border-color: #3c3164 #cfcae6 #cfcae6 #3c3164; }
.memo textarea { flex: 1; min-width: 0; padding: 0; border: 0; resize: none; background: none; outline: 0; overflow: hidden; font-size: 11px; line-height: 13px; }
.bar { display: flex; flex-direction: column; justify-content: space-between; width: 15px; background: #cbc5e6; }
.bar i { display: flex; align-items: center; justify-content: center; height: 15px; background: #b1a9da; border: 1px solid; border-color: #dad5f2 #2d2452 #2d2452 #dad5f2; }
.bar i::before { content: ""; border: solid transparent; border-width: 3px 3px 0; border-top-color: #6d64a0; }
.bar .up::before { border-width: 0 3px 3px; border-bottom-color: #6d64a0; }
.quick { display: flex; flex-direction: column; justify-content: flex-end; gap: 9px; height: 108px; padding-left: 7px; }
.quick span { color: #8e87b2; }
label { white-space: nowrap; }
.quick label, .range label { display: flex; align-items: center; gap: 6px; }
input[type="checkbox"] { appearance: none; display: flex; width: 12px; height: 12px; background: #fff; border: solid; border-width: 2px 1px 1px 2px; border-color: #3c3164 #dcd8f2 #dcd8f2 #3c3164; }
input[type="checkbox"]:checked::before { content: ""; width: 4px; height: 7px; margin: -1px 0 0 2px; border: solid #000; border-width: 0 2px 2px 0; transform: rotate(40deg); }
.range { display: flex; flex-direction: column; gap: 2px; padding-top: 28px; }
.ask { display: flex; align-items: center; justify-content: center; gap: 6px; width: 100px; height: 24px; margin-top: 1px; background: linear-gradient(#fff, #e6e3f4 60%, #c0badf); border: 2px solid #3c3164; border-radius: 2px; }
.notes { padding: 4px 0 0 19px; color: #e0202c; }
.notes p { line-height: 18px; white-space: nowrap; }

.grouping { height: 27px; padding-left: 3px; background: #5c4cad; color: #a99ddc; line-height: 28px; }
.gridbox { flex: 1; background: #fdfdfd; overflow: hidden; }
.grid { width: 100%; table-layout: fixed; border-collapse: collapse; font-size: 11px; line-height: 14px; }
.grid th, .grid td { height: 17px; padding: 0 1px 0 3px; border: 1px solid #b9b5c6; border-top: 0; border-left: 0; text-align: left; white-space: nowrap; overflow: hidden; }
.grid th { background: #b1a9da; border-color: #8d84bd; font-weight: normal; font-size: 12px; padding: 0 1px 0 2px; }
.grid th div { display: flex; align-items: center; justify-content: space-between; height: 16px; }
.grid th span { flex: 1; overflow: hidden; }
.grid th svg { margin-right: 5px; }
.filter { flex: none; width: 14px; height: 13px; border-color: #7f76b4; }
.grid td > div { display: flex; align-items: center; justify-content: space-between; height: 16px; }
.grid td > div span { flex: 1; overflow: hidden; font-size: 12px; }
.grid .cjk { font-size: 12px; }
.grid td.num { padding-right: 2px; text-align: right; }
.grid td.no { padding-left: 2px; }
.grid .num > div { justify-content: flex-end; gap: 3px; }
.grid tr:nth-child(even) td { background: #efeff1; }
.grid .current .no { background: #5c4cad; color: #fff; }
.grid .current td { padding-right: 0; }
.grid .current td.num { padding-right: 2px; }
.cellbtn { flex: none; width: 12px; height: 16px; background: #b1a9da; border: 1px solid #938ac4; font-size: 9px; line-height: 8px; }
.grid .cellbtn.arrow { border-color: #cfc9ea #756cab #756cab #cfc9ea; }
.cellbtn.arrow::before { border-width: 3px 3px 0; }
.grid td.rate { padding: 0; }
.rate button { display: block; width: 100%; height: 16px; background: #a9a1d2; border: 1px solid; border-color: #cfc9ea #756cab #756cab #cfc9ea; font-size: 12px; line-height: 14px; color: #3c3850; }
.grid td.track { padding: 0; text-align: center; }
.track input[type="checkbox"] { display: block; width: 13px; height: 13px; margin: 0 auto; border: 1px solid #7469a8; }
.grid td.status { padding: 0; }
</style>
